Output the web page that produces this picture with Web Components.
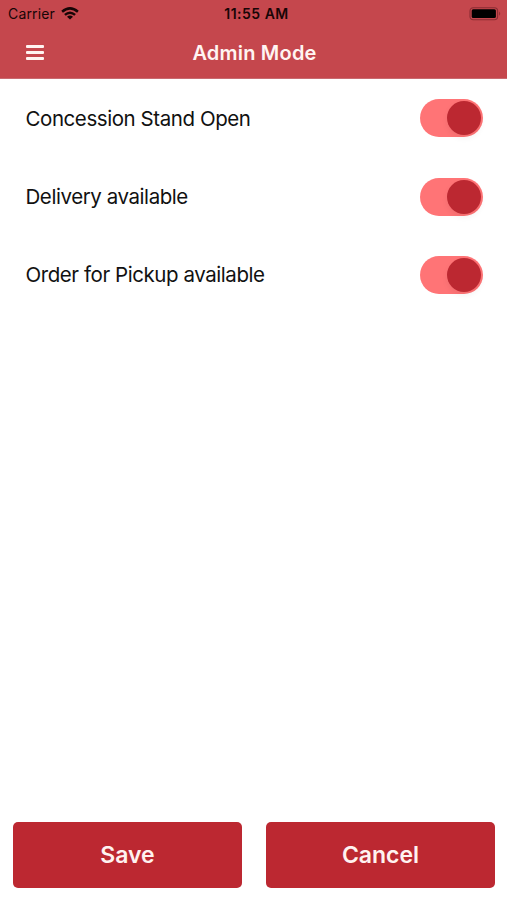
<!DOCTYPE html>
<html lang="en">
<head>
<meta charset="utf-8">
<title>Admin Mode</title>
<style>
html, body { margin: 0; height: 100%; background: #fff; }
body { font-family: Inter, "Liberation Sans", sans-serif; }
</style>
</head>
<body>
<admin-screen></admin-screen>
<script>
const define = (name, html) => {
  const template = document.createElement('template');
  template.innerHTML = html;
  customElements.define(name, class extends HTMLElement {
    constructor() {
      super();
      this.attachShadow({ mode: 'open' }).append(template.content.cloneNode(true));
    }
  });
};

define('status-bar', `
<style>
:host { display: grid; grid-template-columns: 1fr auto 1fr; align-items: center; height: 27px; padding: 0 5px 0 8px; color: #170506; box-sizing: border-box; }
.carrier { display: flex; align-items: center; gap: 6px; font-size: 14px; line-height: 27px; letter-spacing: 0.15px; }
.time { font-size: 14px; font-weight: 600; line-height: 27px; letter-spacing: 0.5px; padding-left: 3px; }
.battery { justify-self: end; display: block; }
svg { display: block; }
</style>
<div class="carrier"><span>Carrier</span>
<svg width="18" height="13" viewBox="0 0 18 13"><g fill="none" stroke="#170506" stroke-width="2.5"><path d="M1.1 4.8Q9-2 16.9 4.8"/><path d="M3.9 7.9Q9 3.5 14.1 7.9"/></g><path d="M9 12.6L6 9.7Q9 7.3 12 9.7Z" fill="#170506"/></svg></div>
<div class="time">11:55 AM</div>
<svg class="battery" width="33" height="14" viewBox="0 0 33 14"><rect x="1" y=".7" width="27.6" height="12" rx="3.2" fill="none" stroke="#8a2d33" stroke-width="1.1"/><rect x="2.7" y="2.3" width="24.2" height="8.8" rx="1.5" fill="#000"/><path d="M30.2 4.6Q32.2 6.7 30.2 8.8Z" fill="#8a2d33"/></svg>
`);

define('menu-button', `
<style>
:host { display: flex; flex-direction: column; gap: 3px; width: 18px; }
i { height: 3px; border-radius: 1px; background: #fff4f2; }
</style><i></i><i></i><i></i>
`);

define('nav-bar', `
<style>
:host { display: grid; grid-template-columns: 1fr auto 1fr; align-items: center; height: 52px; padding: 0 24px 0 26px; box-sizing: border-box; border-bottom: 1px solid #c96a70; color: #fff4f2; }
.title { font-size: 20px; font-weight: 600; line-height: 50px; letter-spacing: 0.2px; }
menu-button, ::slotted(menu-button) { margin-top: -1px; }
</style>
<slot name="action"></slot><div class="title"><slot></slot></div>
`);

define('toggle-switch', `
<style>
:host { display: flex; align-items: center; justify-content: flex-end; width: 63px; height: 38px; padding-right: 2px; box-sizing: border-box; border-radius: 19px; background: #ff7476; }
i { width: 34px; height: 34px; border-radius: 50%; background: #bc2831; box-shadow: 0 3px 6px rgba(0,0,0,.06); }
</style><i></i>
`);

define('setting-row', `
<style>
:host { display: flex; align-items: center; justify-content: space-between; height: 78.2px; padding: 0 24px 0 25.5px; font-size: 20.5px; color: #111; }
span { line-height: 30px; padding-top: 1px; letter-spacing: -0.43px; }
</style><span><slot></slot></span><toggle-switch></toggle-switch>
`);

define('action-button', `
<style>
:host { display: flex; flex: 1; }
button { flex: 1; height: 66px; border: 0; border-radius: 5px; padding: 0; background: #bc2831; color: #fff2f0; font: 600 23px/66px Inter, "Liberation Sans", sans-serif; }
</style><button><slot></slot></button>
`);

define('admin-screen', `
<style>
:host { display: flex; flex-direction: column; height: 900px; overflow: hidden; }
header { background: #c5474d; }
main { flex: 1; padding-top: 0.4px; }
footer { display: flex; gap: 24px; padding: 0 12px 12px 13px; }
</style>
<header><status-bar></status-bar><nav-bar><menu-button slot="action"></menu-button>Admin Mode</nav-bar></header>
<main><setting-row>Concession Stand Open</setting-row><setting-row>Delivery available</setting-row><setting-row>Order for Pickup available</setting-row></main>
<footer><action-button>Save</action-button><action-button>Cancel</action-button></footer>
`);
</script>
</body>
</html>
